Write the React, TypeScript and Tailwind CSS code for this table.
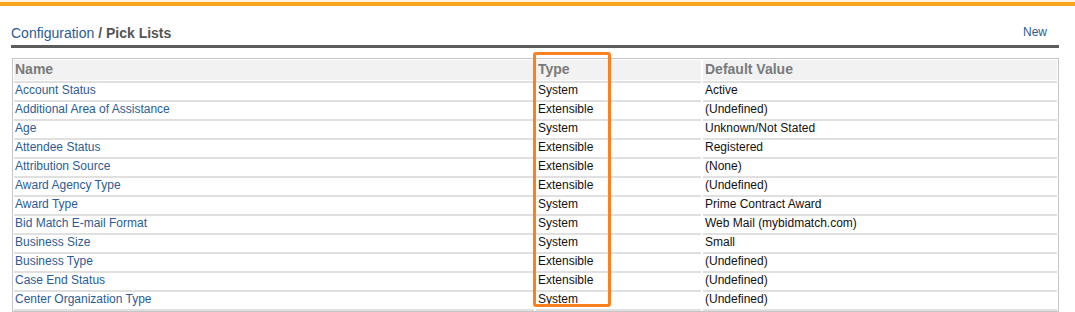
import React from 'react';

interface PickList {
  name: string;
  type: 'System' | 'Extensible';
  defaultValue: string;
}

const pickLists: PickList[] = [
  { name: 'Account Status', type: 'System', defaultValue: 'Active' },
  { name: 'Additional Area of Assistance', type: 'Extensible', defaultValue: '(Undefined)' },
  { name: 'Age', type: 'System', defaultValue: 'Unknown/Not Stated' },
  { name: 'Attendee Status', type: 'Extensible', defaultValue: 'Registered' },
  { name: 'Attribution Source', type: 'Extensible', defaultValue: '(None)' },
  { name: 'Award Agency Type', type: 'Extensible', defaultValue: '(Undefined)' },
  { name: 'Award Type', type: 'System', defaultValue: 'Prime Contract Award' },
  { name: 'Bid Match E-mail Format', type: 'System', defaultValue: 'Web Mail (mybidmatch.com)' },
  { name: 'Business Size', type: 'System', defaultValue: 'Small' },
  { name: 'Business Type', type: 'Extensible', defaultValue: '(Undefined)' },
  { name: 'Case End Status', type: 'Extensible', defaultValue: '(Undefined)' },
  { name: 'Center Organization Type', type: 'System', defaultValue: '(Undefined)' },
];

const App: React.FC = () => {
  return (
    <div className="relative h-[312px] w-full overflow-hidden bg-white font-['Liberation_Sans',Arial,sans-serif]">
      {/* top accent bar */}
      <div className="h-[2px] bg-[#fdf3e4]" />
      <div className="h-[4px] bg-[#f8a51c]" />

      {/* breadcrumb header */}
      <div className="ml-[11px] mr-[16px] mt-[17px]">
        <div className="flex items-start justify-between">
          <div className="text-[14px] leading-[20px]">
            <a href="#" className="text-[#2b5c96]">Configuration</a>
            <span className="font-bold text-[#555555]"> / Pick Lists</span>
          </div>
          <a href="#" className="mr-[12px] mt-[-1px] text-[12px] leading-[20px] text-[#2b5c96]">
            New
          </a>
        </div>
        <div className="mt-[2px] h-[3px] bg-[#5c5c5c]" />
      </div>

      {/* pick list table */}
      <div className="ml-[12px] mt-[10px] w-[1047px] border border-[#c6c6c6] px-[1px] pt-[1px]">
        <div className="flex gap-[2px] text-[14px] font-bold leading-[19px] text-[#7a7a7a]">
          <div className="h-[20px] w-[520px] bg-[#f2f2f2] pl-[1px]">Name</div>
          <div className="h-[20px] w-[165px] bg-[#f2f2f2] pl-[2px]">Type</div>
          <div className="h-[20px] flex-1 bg-[#f2f2f2] pl-[2px]">Default Value</div>
        </div>
        <div className="mt-[1px]">
          {pickLists.map((item) => (
            <div key={item.name} className="flex gap-[2px] text-[12px] leading-[14px]">
              <div className="h-[19px] w-[520px] border-t-2 border-[#e0e0e0] pl-[1px]">
                <a href="#" className="text-[#2b5c96]">{item.name}</a>
              </div>
              <div className="h-[19px] w-[165px] border-t-2 border-[#e0e0e0] pl-[2px] text-[#111111]">
                {item.type}
              </div>
              <div className="h-[19px] flex-1 border-t-2 border-[#e0e0e0] pl-[2px] text-[#111111]">
                {item.defaultValue}
              </div>
            </div>
          ))}
          <div className="flex gap-[2px]">
            <div className="h-[2px] w-[520px] bg-[#e0e0e0]" />
            <div className="h-[2px] w-[165px] bg-[#e0e0e0]" />
            <div className="h-[2px] flex-1 bg-[#e0e0e0]" />
          </div>
        </div>
      </div>

      {/* highlight annotation around the Type column */}
      <div className="absolute left-[533px] top-[52px] h-[255px] w-[78px] rounded-[3px] border-[3px] border-[#fb801f]" />
    </div>
  );
};

export default App;
